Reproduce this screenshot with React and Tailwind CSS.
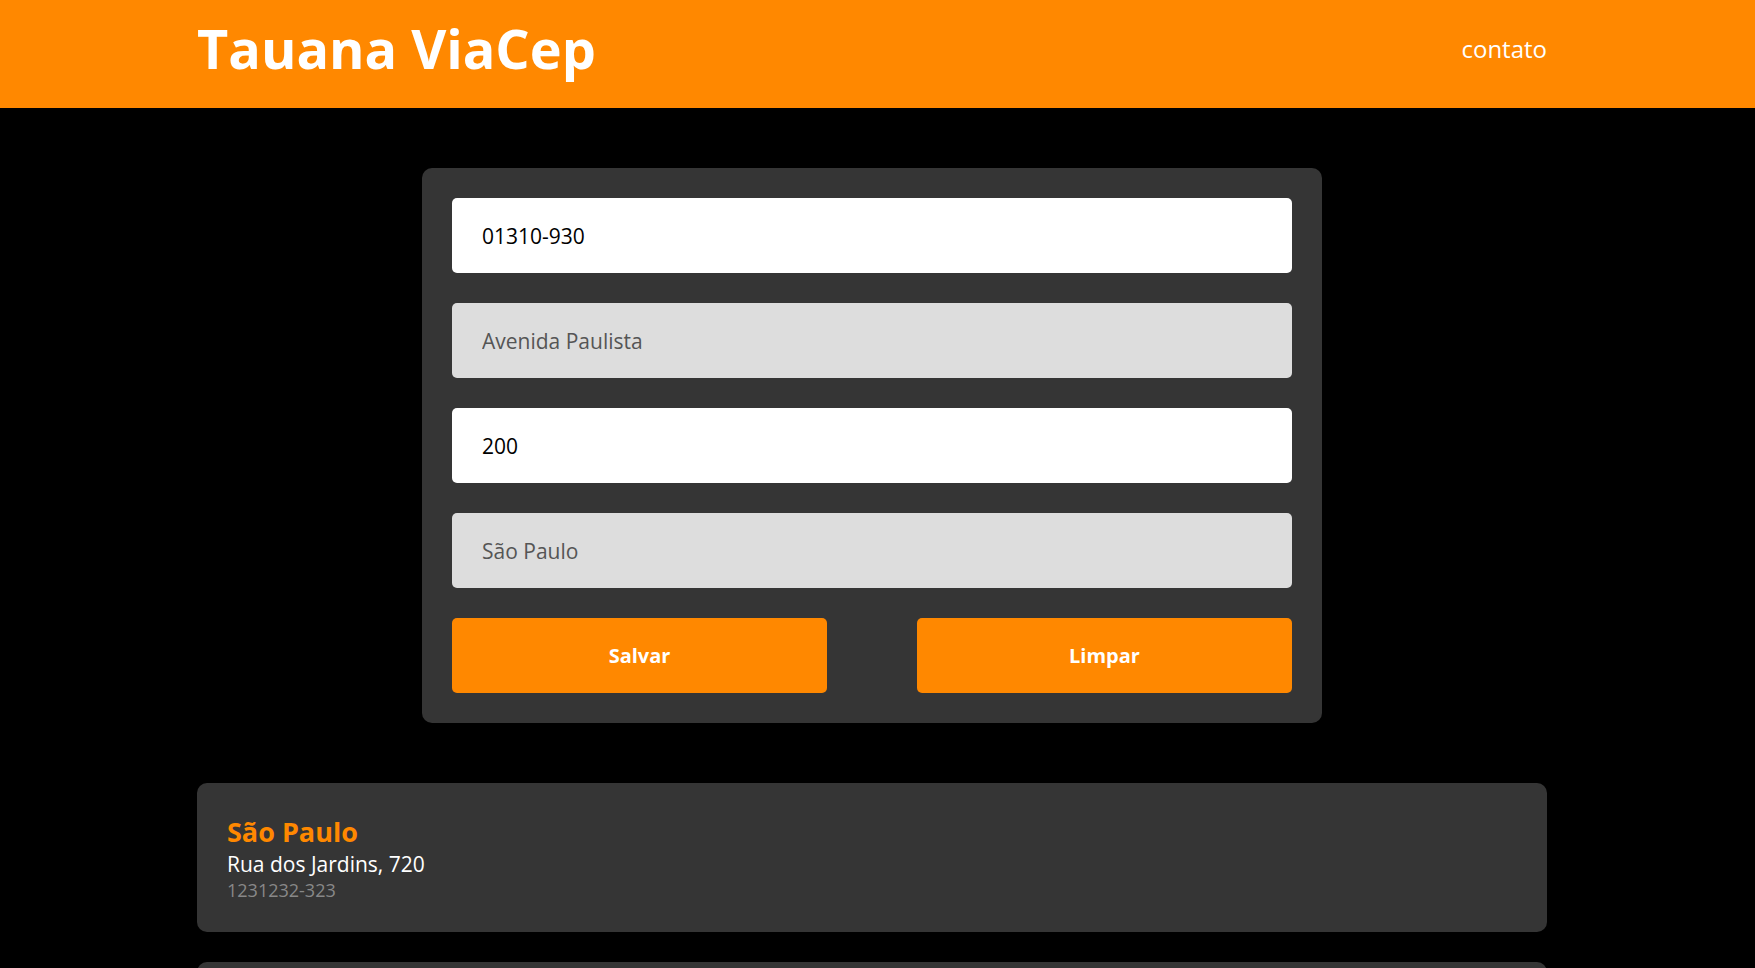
import React, { useState } from "react";

const enderecos = [
  { cidade: "São Paulo", rua: "Rua dos Jardins", numero: "720", cep: "1231232-323" },
  { cidade: "Rio de Janeiro", rua: "Rua das Flores", numero: "150", cep: "2204001-120" },
];

const App = () => {
  const [cep, setCep] = useState("01310-930");
  const [numero, setNumero] = useState("200");
  const logradouro = "Avenida Paulista";
  const cidade = "São Paulo";

  const limpar = () => {
    setCep("");
    setNumero("");
  };

  return (
    <div className="min-h-screen bg-black font-['Open_Sans',sans-serif]">
      {/* Header */}
      <header className="h-[108px] bg-[#ff8800] pb-[12px]">
        <div className="ml-[197px] flex h-full w-[1350px] items-center justify-between">
          <h1 className="text-[54px] font-bold text-white">Tauana ViaCep</h1>
          <a href="#" className="mt-[2px] text-[24px] text-white">
            contato
          </a>
        </div>
      </header>

      <main className="ml-[197px] w-[1350px] pt-[60px]">
        {/* Form */}
        <div className="mx-auto flex w-[900px] flex-col gap-[30px] rounded-[10px] bg-[#353535] p-[30px]">
          <input
            value={cep}
            onChange={(e) => setCep(e.target.value)}
            className="h-[75px] w-full rounded-[5px] bg-white px-[30px] text-[21px] text-black outline-none"
          />
          <input
            value={logradouro}
            disabled
            className="h-[75px] w-full rounded-[5px] bg-[#dddddd] px-[30px] text-[21px] text-[#555555] outline-none"
          />
          <input
            value={numero}
            onChange={(e) => setNumero(e.target.value)}
            className="h-[75px] w-full rounded-[5px] bg-white px-[30px] text-[21px] text-black outline-none"
          />
          <input
            value={cidade}
            disabled
            className="h-[75px] w-full rounded-[5px] bg-[#dddddd] px-[30px] text-[21px] text-[#555555] outline-none"
          />
          <div className="flex justify-between">
            <button className="h-[75px] w-[375px] rounded-[5px] bg-[#ff8800] text-[20px] font-bold text-white">
              Salvar
            </button>
            <button
              onClick={limpar}
              className="h-[75px] w-[375px] rounded-[5px] bg-[#ff8800] text-[20px] font-bold text-white"
            >
              Limpar
            </button>
          </div>
        </div>

        {/* Lista de enderecos */}
        <div className="mt-[60px] flex flex-col gap-[30px] pb-[30px]">
          {enderecos.map((item, index) => (
            <div key={index} className="rounded-[10px] bg-[#353535] p-[30px]">
              <h3 className="text-[27px] leading-[37px] font-bold text-[#ff8800]">{item.cidade}</h3>
              <p className="text-[21px] leading-[28px] text-white">
                {item.rua}, {item.numero}
              </p>
              <p className="text-[18px] leading-[24px] text-[#888888]">{item.cep}</p>
            </div>
          ))}
        </div>
      </main>
    </div>
  );
};

export default App;
